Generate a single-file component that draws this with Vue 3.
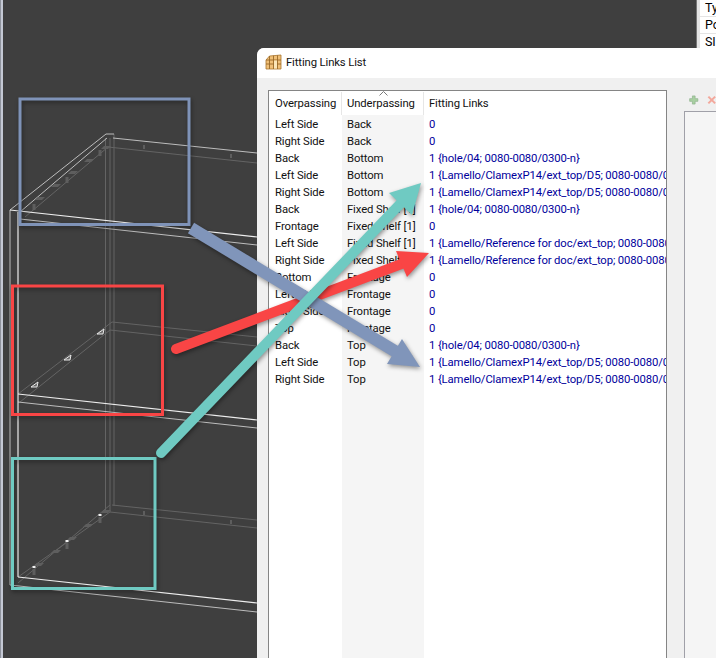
<script setup>
const header = ['Overpassing', 'Underpassing', 'Fitting Links']
const clamex = '1 {Lamello/ClamexP14/ext_top/D5; 0080-0080/0300-n}'
const hole = '1 {hole/04; 0080-0080/0300-n}'
const refer = '1 {Lamello/Reference for doc/ext_top; 0080-0080/0300-n}'
const rows = [
  ['Left Side', 'Back', '0'],
  ['Right Side', 'Back', '0'],
  ['Back', 'Bottom', hole],
  ['Left Side', 'Bottom', clamex],
  ['Right Side', 'Bottom', clamex],
  ['Back', 'Fixed Shelf [1]', hole],
  ['Frontage', 'Fixed Shelf [1]', '0'],
  ['Left Side', 'Fixed Shelf [1]', refer],
  ['Right Side', 'Fixed Shelf [1]', refer],
  ['Bottom', 'Frontage', '0'],
  ['Left Side', 'Frontage', '0'],
  ['Right Side', 'Frontage', '0'],
  ['Top', 'Frontage', '0'],
  ['Back', 'Top', hole],
  ['Left Side', 'Top', clamex],
  ['Right Side', 'Top', clamex],
]
const props = ['Ty', 'Po', 'SI']
const whiteLines = [
  [10, 210, 257, 237], [18, 212, 18, 577], [18, 394, 257, 420], [18, 577, 257, 603],
]
const softLines = [
  [10, 210, 106, 134], [106, 134, 114, 134], [20, 212, 107, 138], [113, 138, 257, 153],
  [20, 219, 257, 245], [10, 210, 10, 585], [18, 402, 257, 428], [10, 585, 257, 612],
]
const dimLines = [
  [25, 217, 108, 147], [108, 147, 257, 163], [105.5, 138, 105.5, 510], [110, 138, 110, 512],
  [114, 134, 114, 506], [112, 322, 257, 337], [110, 330, 257, 346], [18, 394, 112, 322],
  [20, 402, 110, 330], [112, 505, 257, 520], [110, 512, 257, 528], [18, 577, 110, 512],
  [18, 583, 110, 505],
]
const markers = [
  [100, 150, 3, 6], [67, 177, 3, 6], [34, 204, 3, 6], [144, 145, 2, 4], [231, 154, 2, 4],
  [100, 517, 3, 6], [67, 543, 3, 6], [34, 569, 3, 6], [144, 511, 2, 4], [231, 520, 2, 4],
]
const dashes = [
  [106, 147], [89, 160], [73, 172], [56, 185], [40, 198],
  [106, 511], [88, 525], [72, 538], [56, 551], [39, 564],
]
const triangles = [
  [101, 332], [68, 358], [35, 385],
]
const whiteDots = [
  [100, 515], [67, 541], [34, 567],
]
</script>

<template>
  <div class="stage">
    <svg class="scene" width="716" height="658" viewBox="0 0 716 658">
      <line v-for="(l, i) in dimLines" :key="'d' + i" :x1="l[0]" :y1="l[1]" :x2="l[2]" :y2="l[3]" stroke="#646464" stroke-width="1" />
      <line v-for="(l, i) in softLines" :key="'s' + i" :x1="l[0]" :y1="l[1]" :x2="l[2]" :y2="l[3]" stroke="#bdbdbd" stroke-width="1" />
      <line v-for="(l, i) in whiteLines" :key="'w' + i" :x1="l[0]" :y1="l[1]" :x2="l[2]" :y2="l[3]" stroke="#ededed" stroke-width="1.2" />
      <rect v-for="(m, i) in markers" :key="'m' + i" :x="m[0] - m[2] / 2" :y="m[1]" :width="m[2]" :height="m[3]" fill="#5e5e5e" />
      <path v-for="(d, i) in dashes" :key="'a' + i" :d="`M${d[0] - 5} ${d[1] + 2}h7l3 -3h-7z`" fill="#5e5e5e" />
      <path v-for="(t, i) in triangles" :key="'t' + i" :d="`M${t[0] - 4} ${t[1] + 2}l7 -5l-1 5z`" fill="#6a6a6a" stroke="#e8e8e8" stroke-width="1" />
      <rect v-for="(d, i) in whiteDots" :key="'o' + i" :x="d[0] - 1.5" :y="d[1] - 1" width="3" height="2" fill="#f0f0f0" />
      <g fill="none" stroke-width="3" class="shadowed">
        <rect x="20" y="99" width="169" height="125.5" stroke="#7f93b8" />
        <rect x="12.5" y="286" width="150" height="128.5" stroke="#f94545" />
        <rect x="12.5" y="458.5" width="142.5" height="130" stroke="#6fcac2" />
      </g>
    </svg>

    <aside class="props">
      <div class="props-rule"></div>
      <div class="props-cells">
        <div v-for="p in props" :key="p" class="props-cell">{{ p }}</div>
      </div>
    </aside>

    <section class="window">
      <header class="titlebar">
        <svg class="app-icon" width="17" height="17" viewBox="0 0 17 17">
          <path d="M1 6 4.500 2 16 1v14H4.500L1 15z" fill="#f0c078" stroke="#a8742c" stroke-width=".8" />
          <path d="M4.500 2v13M8.500 1.700V15M12.500 1.300V15M1 6h15M1 10h15" stroke="#9a6a28" stroke-width=".9" fill="none" />
          <path d="M9 6.500h3v8H9z" fill="#fbe6b8" />
        </svg>
        <span class="title">Fitting Links List</span>
      </header>
      <div class="content">
        <div class="list">
          <div class="list-grid">
            <div class="caret-wrap">
              <svg class="caret" width="9" height="5" viewBox="0 0 9 5"><path d="M.5 4.500 4.500.5l4 4" fill="none" stroke="#7a7a7a" /></svg>
            </div>
            <div class="head-row">
              <div v-for="h in header" :key="h" class="head-cell">{{ h }}</div>
            </div>
            <div class="body">
              <div class="shade"></div>
              <div v-for="(r, i) in rows" :key="i" class="row">
                <div class="cell">{{ r[0] }}</div>
                <div class="cell">{{ r[1] }}</div>
                <div class="cell link">{{ r[2] }}</div>
              </div>
            </div>
          </div>
        </div>
        <div class="side">
          <div class="tools">
            <svg width="14" height="14" viewBox="0 0 14 14"><path d="M5 1h4v4h4v4H9v4H5V9H1V5h4z" fill="#a9d0a2" stroke="#8bb088" /></svg>
            <svg width="14" height="14" viewBox="0 0 14 14"><path d="M2 2l10 10M12 2 2 12" stroke="#f3a89c" stroke-width="3" /></svg>
          </div>
          <div class="side-panel"></div>
        </div>
      </div>
    </section>

    <svg class="arrows" width="716" height="658" viewBox="0 0 716 658">
      <g class="shadowed">
        <line x1="176" y1="349" x2="404" y2="263" stroke="#f94545" stroke-width="10" stroke-linecap="round" />
        <path d="M429 253 396 251 407 277z" fill="#f94545" />
      </g>
      <g class="shadowed">
        <line x1="191" y1="228" x2="398" y2="353" stroke="#8095ba" stroke-width="12" />
        <path d="M420 367 402 339 387 364z" fill="#8095ba" />
      </g>
      <g class="shadowed">
        <line x1="161" y1="453" x2="402" y2="202" stroke="#6fcac2" stroke-width="10" stroke-linecap="round" />
        <path d="M421 183 389 193 412 215z" fill="#6fcac2" />
      </g>
    </svg>
  </div>
</template>

<style>
html, body { margin: 0; background: #3f3f3f; }
</style>

<style scoped>
.stage {
  position: relative;
  width: 716px;
  height: 658px;
  overflow: hidden;
  background: #3f3f3f;
  font-family: Roboto, "Noto Sans", sans-serif;
  font-size: 11.3px;
  letter-spacing: -0.12px;
  color: #111;
}
.stage::before {
  content: "";
  position: absolute;
  left: 0;
  top: 0;
  bottom: 0;
  width: 3px;
  background: linear-gradient(90deg, #8e929c 0, #8e929c 1px, #c4c8d4 1px, #c4c8d4 3px);
}
.scene, .arrows {
  position: absolute;
  left: 0;
  top: 0;
}
.arrows { pointer-events: none; }
.shadowed { filter: drop-shadow(1px 2px 2px rgba(0, 0, 0, .4)); }
.props {
  position: absolute;
  left: 696px;
  top: 0;
  right: 0;
  height: 48px;
  display: flex;
  background: #e4e4e4;
  border-left: 1px solid #777;
}
.props-rule {
  width: 3px;
  background: #b5b5b5;
  margin-right: 3px;
}
.props-cells { flex: 1; }
.props-cell {
  height: 16px;
  margin-bottom: 1px;
  background: #fff;
  line-height: 16px;
  padding-left: 5px;
  color: #000;
  font-size: 12.5px;
}
.window {
  position: absolute;
  left: 257px;
  top: 48px;
  width: 459px;
  height: 610px;
  display: flex;
  flex-direction: column;
  background: #f0f0f0;
  border-radius: 7px 0 0 0;
  overflow: hidden;
}
.titlebar {
  height: 30px;
  flex: none;
  background: #fff;
  display: flex;
  align-items: center;
  gap: 4px;
  padding: 0 0 1px 8px;
  box-sizing: border-box;
}
.title { color: #111; }
.content {
  flex: 1;
  min-height: 0;
  display: flex;
  padding: 12px 0 0 11px;
}
.list {
  width: 399px;
  flex: none;
  box-sizing: border-box;
  background: #fff;
  border: 1px solid #858585;
  border-bottom: 0;
  overflow: hidden;
}
.list-grid {
  position: relative;
  height: 100%;
  display: flex;
  flex-direction: column;
}
.caret-wrap {
  position: absolute;
  left: 110px;
  top: 0;
  height: 5px;
}
.caret { display: block; }
.head-row, .row {
  display: grid;
  grid-template-columns: 73px 82px 1fr;
}
.head-row {
  height: 24px;
  flex: none;
}
.head-cell {
  padding: 4px 0 0 6px;
  line-height: 16px;
  border-right: 1px solid #e6e6e6;
  margin-top: 1px;
  white-space: nowrap;
  box-sizing: border-box;
}
.head-cell:nth-child(2) { padding-left: 5px; }
.head-cell:last-child { border-right: 0; padding-left: 5px; }
.body {
  position: relative;
  flex: 1;
  padding-top: 1px;
}
.shade {
  position: absolute;
  left: 73px;
  top: 0;
  bottom: 0;
  width: 82px;
  background: #f5f5f5;
}
.row {
  position: relative;
  height: 17px;
  line-height: 17px;
}
.cell {
  padding-left: 6px;
  overflow: hidden;
  white-space: nowrap;
}
.cell:nth-child(2) { padding-left: 5px; }
.link { color: #00009c; padding-left: 5px; }
.side {
  flex: 1;
  min-width: 0;
  display: flex;
  flex-direction: column;
  padding-left: 17px;
}
.tools {
  height: 21px;
  flex: none;
  box-sizing: border-box;
  display: flex;
  align-items: center;
  gap: 8px;
  padding: 0 0 2px 5px;
}
.side-panel {
  flex: 1;
  background: #f5f5f5;
  border: 1px solid #a0a0a8;
  border-right: 0;
  border-bottom: 0;
}
</style>
